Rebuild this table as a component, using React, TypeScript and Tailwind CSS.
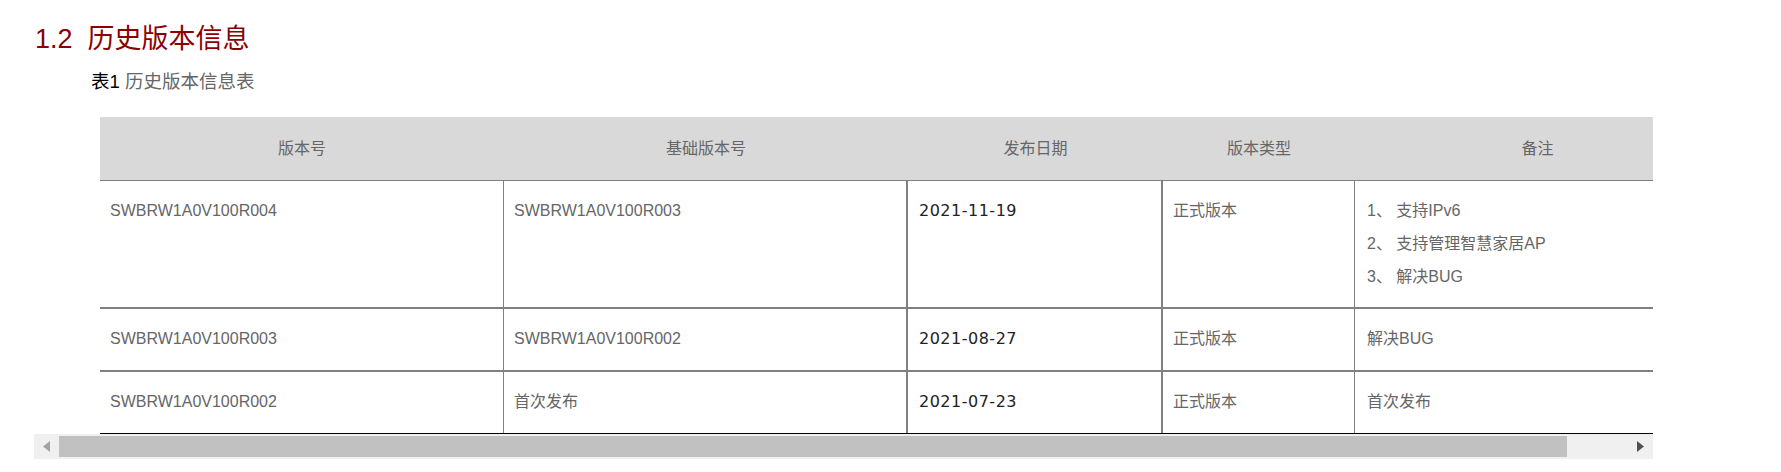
const rows = [
    { id: "SWBRW1A0V100R004", base: "SWBRW1A0V100R003", date: "2021-11-19", type: "正式版本", notes: ["1、 支持IPv6", "2、 支持管理智慧家居AP", "3、 解决BUG"], h: "h-[128px] border-b-2 border-[#808080]" },
    { id: "SWBRW1A0V100R003", base: "SWBRW1A0V100R002", date: "2021-08-27", type: "正式版本", notes: ["解决BUG"], h: "h-[63px] border-b-2 border-[#808080]" },
    { id: "SWBRW1A0V100R002", base: "首次发布", date: "2021-07-23", type: "正式版本", notes: ["首次发布"], h: "h-[62px] border-b border-black" },
];

export default function App() {
    return (
        <div className="w-[1781px] h-[472px] overflow-hidden bg-white font-['Liberation_Sans','Noto_Sans_CJK_SC',sans-serif]">
            <h2 className="pl-[35px] pt-[21px] text-[27px] leading-[37px] font-normal text-[#8b0000] whitespace-pre">1.2  历史版本信息</h2>
            <p className="mt-[12px] pl-[91px] text-[18.5px] leading-[24px] text-[#666]">
                <span className="text-black">表1</span> 历史版本信息表
            </p>

            <div className="mt-[23px] ml-[34px] w-[1619px]">
                <div className="overflow-hidden">
                    <div className="ml-[66px] w-[1620px] text-[16px] text-[#666]">
                        {/* header */}
                        <div className="flex h-[64px] bg-[#d9d9d9] border-b border-[#808080]">
                            <div className="w-[404px] flex items-center justify-center">版本号</div>
                            <div className="w-[404px] flex items-center justify-center">基础版本号</div>
                            <div className="w-[255px] flex items-center justify-center">发布日期</div>
                            <div className="w-[192px] flex items-center justify-center">版本类型</div>
                            <div className="w-[365px] flex items-center justify-center">备注</div>
                        </div>

                        {rows.map((r) => (
                            <div key={r.id} className={`flex ${r.h}`}>
                                <div className="w-[404px] shrink-0 border-r border-[#808080] pl-[10px] pt-[13px] leading-[33px]">{r.id}</div>
                                <div className="w-[404px] shrink-0 border-r-2 border-[#808080] pl-[10px] pt-[13px] leading-[33px]">{r.base}</div>
                                <div className="w-[255px] shrink-0 border-r-2 border-[#808080] pl-[11px] pt-[13px] leading-[33px] text-[#222] tracking-[0.5px] font-['DejaVu_Sans',sans-serif]">{r.date}</div>
                                <div className="w-[192px] shrink-0 border-r border-[#808080] pl-[10px] pt-[13px] leading-[33px]">{r.type}</div>
                                <div className="w-[365px] shrink-0 pl-[12px] pt-[13px] leading-[33px] whitespace-pre">
                                    {r.notes.map((n) => (
                                        <div key={n}>{n}</div>
                                    ))}
                                </div>
                            </div>
                        ))}
                    </div>
                </div>

                {/* horizontal scrollbar */}
                <div className="flex h-[25px] bg-[#f0f0f0]">
                    <div className="w-[25px] flex items-center justify-center">
                        <svg width="7" height="11" viewBox="0 0 7 11"><polygon points="7,0 0,5.5 7,11" fill="#a3a3a3" /></svg>
                    </div>
                    <div className="my-[2px] w-[1508px] bg-[#c1c1c1]" />
                    <div className="flex-1" />
                    <div className="w-[25px] flex items-center justify-center">
                        <svg width="7" height="11" viewBox="0 0 7 11"><polygon points="0,0 7,5.5 0,11" fill="#505050" /></svg>
                    </div>
                </div>
            </div>
        </div>
    );
}
